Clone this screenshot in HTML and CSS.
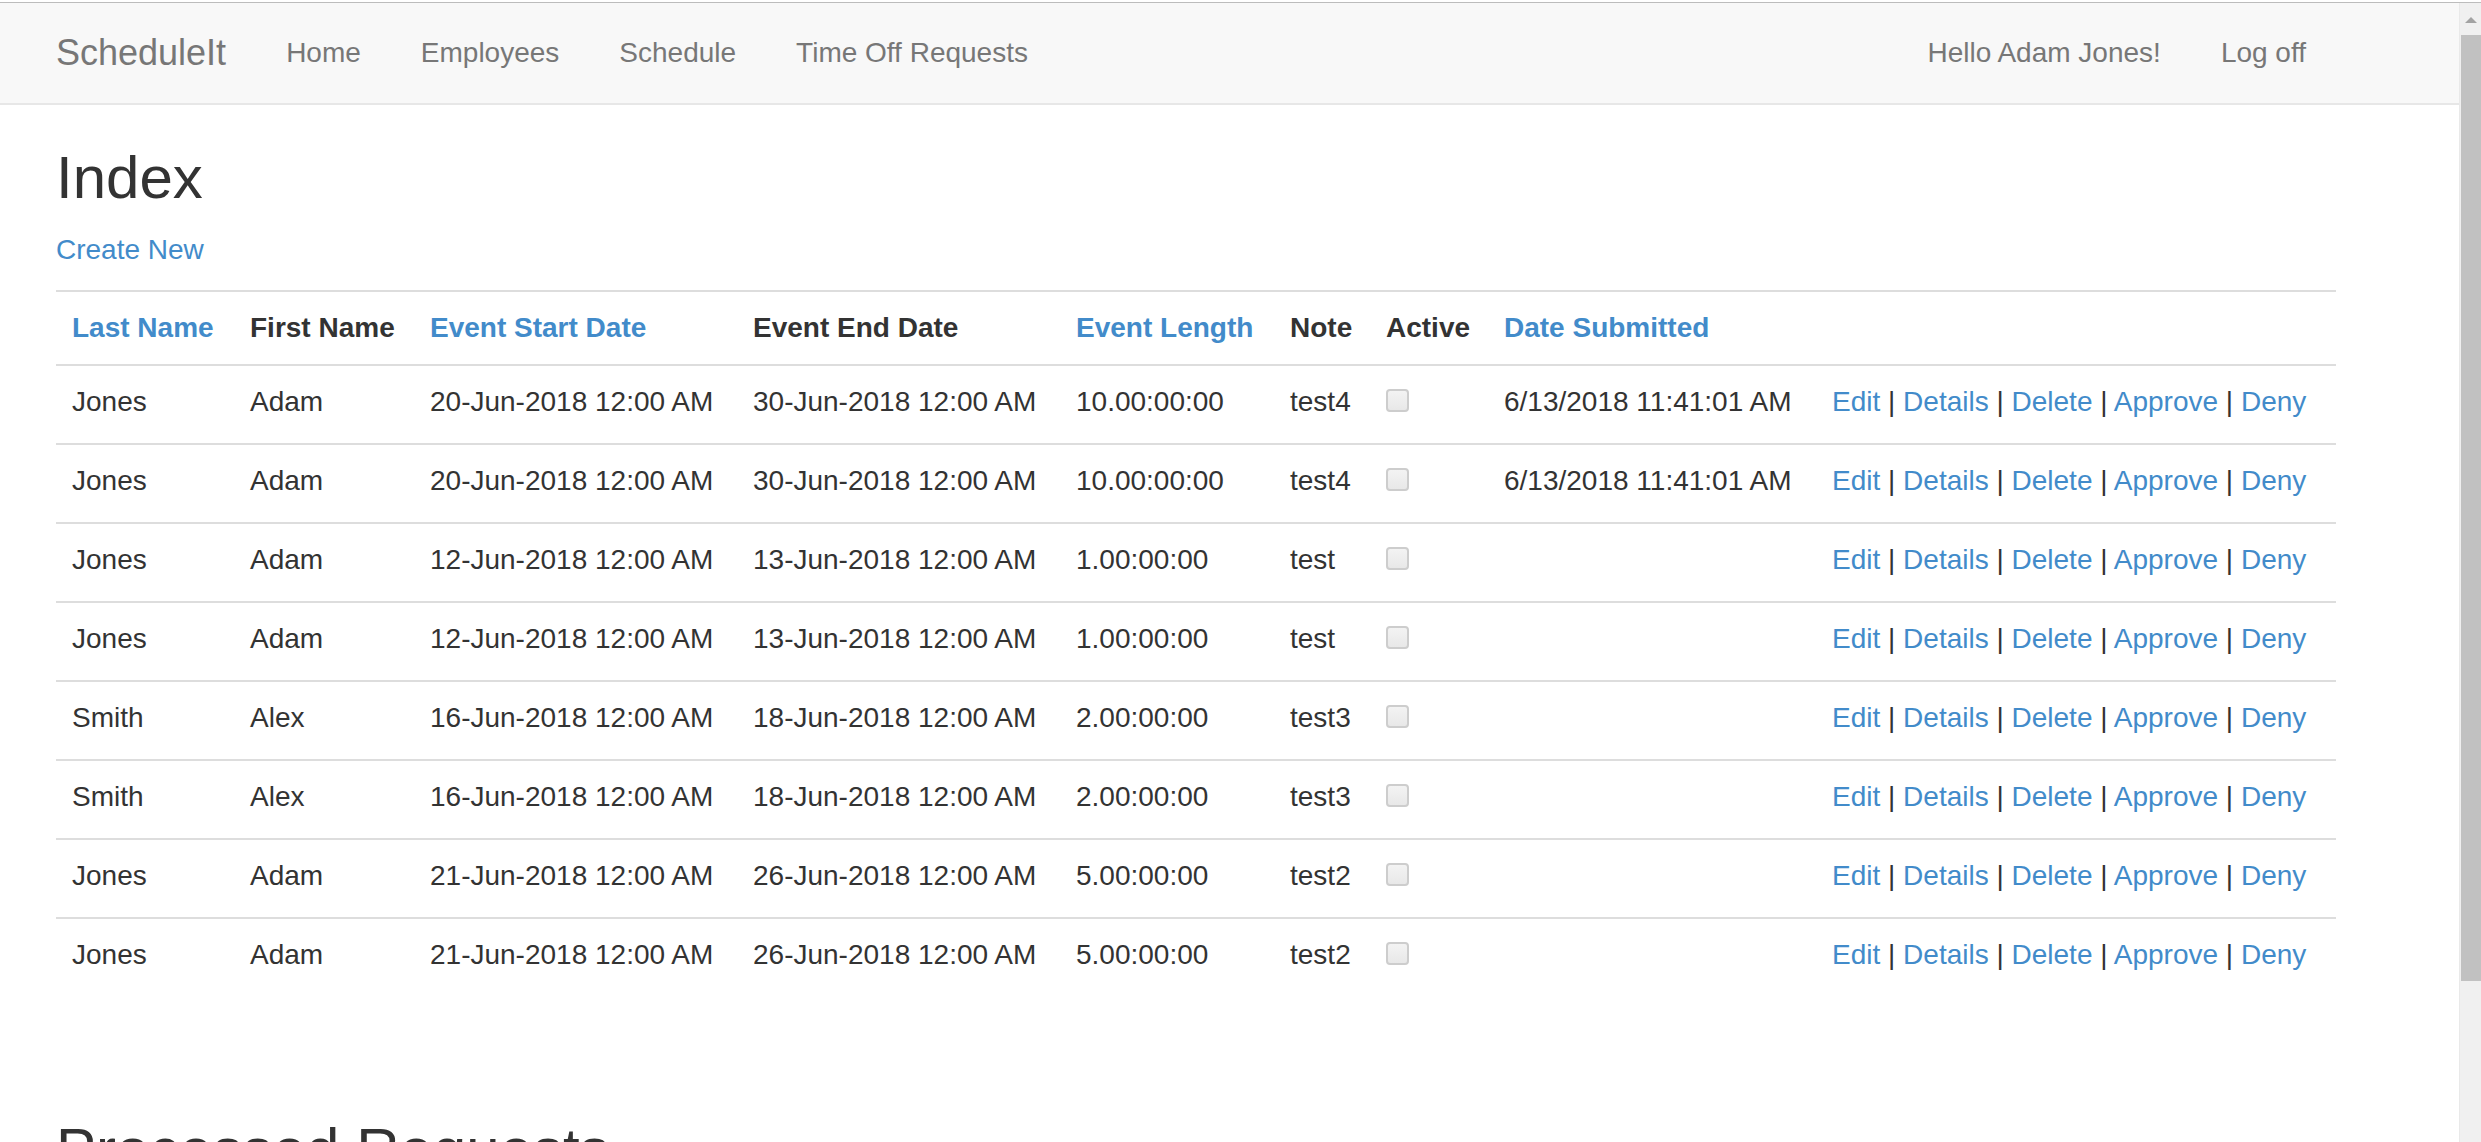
FILE: index.html
```html
<!DOCTYPE html>
<html lang="en">
<head>
<meta charset="utf-8">
<title>Index - ScheduleIt</title>
<link rel="stylesheet" href="styles.css">
</head>
<body>
<div class="topline"></div>
<div class="viewport">
  <div class="page">
    <nav class="navbar">
      <div class="container nav-inner">
        <a class="brand" href="#">ScheduleIt</a>
        <ul class="nav">
          <li><a href="#">Home</a></li>
          <li><a href="#">Employees</a></li>
          <li><a href="#">Schedule</a></li>
          <li><a href="#">Time Off Requests</a></li>
        </ul>
        <ul class="nav nav-right">
          <li><a href="#">Hello Adam Jones!</a></li>
          <li><a href="#">Log off</a></li>
        </ul>
      </div>
    </nav>
    <main class="container body-content">
      <h2>Index</h2>
      <p class="create"><a href="#">Create New</a></p>
      <table class="table">
        <colgroup>
          <col class="w1"><col class="w2"><col class="w3"><col class="w4"><col class="w5"><col class="w6"><col class="w7"><col class="w8"><col class="w9">
        </colgroup>
        <tr class="head">
          <th><a href="#">Last Name</a></th>
          <th>First Name</th>
          <th><a href="#">Event Start Date</a></th>
          <th>Event End Date</th>
          <th><a href="#">Event Length</a></th>
          <th>Note</th>
          <th>Active</th>
          <th><a href="#">Date Submitted</a></th>
          <th></th>
        </tr>
        <tr>
          <td>Jones</td><td>Adam</td><td>20-Jun-2018 12:00 AM</td><td>30-Jun-2018 12:00 AM</td><td>10.00:00:00</td><td>test4</td>
          <td><input type="checkbox" class="check" disabled></td><td>6/13/2018 11:41:01 AM</td>
          <td><a href="#">Edit</a> | <a href="#">Details</a> | <a href="#">Delete</a> | <a href="#">Approve</a> | <a href="#">Deny</a></td>
        </tr>
        <tr>
          <td>Jones</td><td>Adam</td><td>20-Jun-2018 12:00 AM</td><td>30-Jun-2018 12:00 AM</td><td>10.00:00:00</td><td>test4</td>
          <td><input type="checkbox" class="check" disabled></td><td>6/13/2018 11:41:01 AM</td>
          <td><a href="#">Edit</a> | <a href="#">Details</a> | <a href="#">Delete</a> | <a href="#">Approve</a> | <a href="#">Deny</a></td>
        </tr>
        <tr>
          <td>Jones</td><td>Adam</td><td>12-Jun-2018 12:00 AM</td><td>13-Jun-2018 12:00 AM</td><td>1.00:00:00</td><td>test</td>
          <td><input type="checkbox" class="check" disabled></td><td></td>
          <td><a href="#">Edit</a> | <a href="#">Details</a> | <a href="#">Delete</a> | <a href="#">Approve</a> | <a href="#">Deny</a></td>
        </tr>
        <tr>
          <td>Jones</td><td>Adam</td><td>12-Jun-2018 12:00 AM</td><td>13-Jun-2018 12:00 AM</td><td>1.00:00:00</td><td>test</td>
          <td><input type="checkbox" class="check" disabled></td><td></td>
          <td><a href="#">Edit</a> | <a href="#">Details</a> | <a href="#">Delete</a> | <a href="#">Approve</a> | <a href="#">Deny</a></td>
        </tr>
        <tr>
          <td>Smith</td><td>Alex</td><td>16-Jun-2018 12:00 AM</td><td>18-Jun-2018 12:00 AM</td><td>2.00:00:00</td><td>test3</td>
          <td><input type="checkbox" class="check" disabled></td><td></td>
          <td><a href="#">Edit</a> | <a href="#">Details</a> | <a href="#">Delete</a> | <a href="#">Approve</a> | <a href="#">Deny</a></td>
        </tr>
        <tr>
          <td>Smith</td><td>Alex</td><td>16-Jun-2018 12:00 AM</td><td>18-Jun-2018 12:00 AM</td><td>2.00:00:00</td><td>test3</td>
          <td><input type="checkbox" class="check" disabled></td><td></td>
          <td><a href="#">Edit</a> | <a href="#">Details</a> | <a href="#">Delete</a> | <a href="#">Approve</a> | <a href="#">Deny</a></td>
        </tr>
        <tr>
          <td>Jones</td><td>Adam</td><td>21-Jun-2018 12:00 AM</td><td>26-Jun-2018 12:00 AM</td><td>5.00:00:00</td><td>test2</td>
          <td><input type="checkbox" class="check" disabled></td><td></td>
          <td><a href="#">Edit</a> | <a href="#">Details</a> | <a href="#">Delete</a> | <a href="#">Approve</a> | <a href="#">Deny</a></td>
        </tr>
        <tr>
          <td>Jones</td><td>Adam</td><td>21-Jun-2018 12:00 AM</td><td>26-Jun-2018 12:00 AM</td><td>5.00:00:00</td><td>test2</td>
          <td><input type="checkbox" class="check" disabled></td><td></td>
          <td><a href="#">Edit</a> | <a href="#">Details</a> | <a href="#">Delete</a> | <a href="#">Approve</a> | <a href="#">Deny</a></td>
        </tr>
      </table>
      <h2 class="processed">Processed Requests</h2>
    </main>
  </div>
  <div class="scrollbar">
    <div class="sb-arrow"></div>
    <div class="sb-thumb"></div>
  </div>
</div>
</body>
</html>
```

FILE: styles.css
```css
html, body {
  margin: 0;
  padding: 0;
}
body {
  height: 1142px;
  overflow: hidden;
  background: #fff;
  font-family: "Liberation Sans", Arial, Helvetica, sans-serif;
  font-size: 28px;
  line-height: 40px;
  color: #333;
}
a {
  color: #428bca;
  text-decoration: none;
}
.topline {
  height: 2px;
  background: #fff;
  border-bottom: 1px solid #bcbcbc;
}
.viewport {
  display: flex;
  height: 1139px;
}
.page {
  flex: 1;
  min-width: 0;
  overflow: hidden;
}
.container {
  box-sizing: border-box;
  width: 2340px;
  margin-left: 26px;
  padding: 0 30px;
}
.navbar {
  height: 100px;
  background: #f8f8f8;
  border-bottom: 2px solid #e7e7e7;
  margin-bottom: 40px;
}
.nav-inner {
  display: flex;
  align-items: flex-start;
}
.brand {
  display: block;
  margin-left: -30px;
  padding: 30px;
  font-size: 36px;
  line-height: 40px;
  color: #777;
}
.nav {
  display: flex;
  list-style: none;
  margin: 0;
  padding: 0;
}
.nav a {
  display: block;
  padding: 30px;
  line-height: 40px;
  color: #777;
}
.nav-right {
  margin-left: auto;
}
h2 {
  margin: 38px 0 20px;
  font-size: 60px;
  font-weight: 500;
  line-height: 66px;
  color: #333;
}
.create {
  margin: -1px 0 20px;
}
.table {
  width: 100%;
  table-layout: fixed;
  border-collapse: separate;
  border-spacing: 0;
  margin-bottom: 40px;
}
.w1 { width: 178px; }
.w2 { width: 180px; }
.w3 { width: 323px; }
.w4 { width: 323px; }
.w5 { width: 214px; }
.w6 { width: 96px; }
.w7 { width: 118px; }
.w8 { width: 328px; }
.w9 { width: 520px; }
.table th,
.table td {
  padding: 16px;
  border-top: 2px solid #ddd;
  text-align: left;
  vertical-align: top;
  line-height: 40px;
  white-space: nowrap;
}
.table td {
  padding-bottom: 21px;
}
.table th {
  font-weight: bold;
}
.check {
  -webkit-appearance: none;
  appearance: none;
  box-sizing: border-box;
  display: inline-block;
  width: 23px;
  height: 23px;
  margin: 0 0 -1px;
  vertical-align: baseline;
  border: 2px solid #cdcdcd;
  border-radius: 4px;
  background: linear-gradient(#f3f3f3, #e8e8e8);
}
.processed {
  margin-top: 121px;
}
.scrollbar {
  width: 22px;
  flex: none;
  display: flex;
  flex-direction: column;
  background: #f0f0f0;
  border-left: 1px solid #e9e9e9;
  box-sizing: border-box;
}
.sb-arrow {
  height: 32px;
  position: relative;
}
.sb-arrow::after {
  content: "";
  position: absolute;
  left: 5px;
  top: 14px;
  border-left: 6px solid transparent;
  border-right: 6px solid transparent;
  border-bottom: 6px solid #a3a3a3;
}
.sb-thumb {
  height: 946px;
  margin-left: 1px;
  background: #c1c1c1;
}
```
